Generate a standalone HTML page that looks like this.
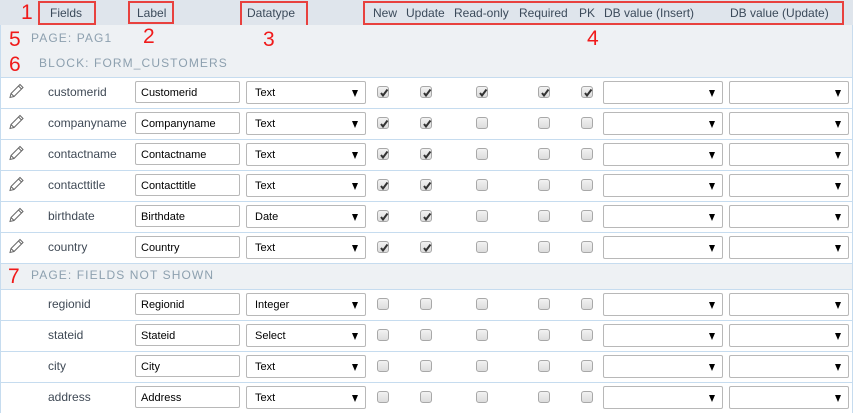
<!DOCTYPE html>
<html><head><meta charset="utf-8"><style>
*{margin:0;padding:0;box-sizing:border-box}
body{width:853px;height:413px;overflow:hidden;background:#fff;font-family:"Liberation Sans",Arial,sans-serif;position:relative}
.a{position:absolute}
.hdr{left:0;top:0;width:853px;height:25px;background:#dfe5ec}
.ht{position:absolute;top:6px;font-size:12px;color:#3b4a5a}
.rb{position:absolute;border:2px solid #e8413e}
.num{position:absolute;color:#f01a1a;font-size:21px;line-height:1}
.sec{position:absolute;left:0;width:853px;background:#eef1f4;box-shadow:inset 1px 0 #c8dcee,inset -1px 0 #c8dcee}
.st{position:absolute;font-size:12px;letter-spacing:1.1px;color:#8da0af}
.row{position:absolute;left:0;width:853px;height:31px;border-top:1px solid #c6dcef;box-shadow:inset 1px 0 #c6dcef,inset -1px 0 #c6dcef}
.fn{position:absolute;left:48px;top:7px;font-size:12px;color:#3f4955}
.in{position:absolute;left:135px;top:3px;width:105px;height:22px;border:1px solid #b8b8b8;border-radius:2px;font-size:11px;color:#000;padding:5px 0 0 5px}
.sel{position:absolute;top:3px;height:23px;border:1px solid #b8b8b8;border-radius:2px;font-size:11px;color:#000;padding:5px 0 0 8px}
.sel:after{content:"";position:absolute;right:7px;top:8px;border-left:3.5px solid transparent;border-right:3.5px solid transparent;border-top:7px solid #000}
.cb{position:absolute;top:8px;width:12px;height:12px;border:1px solid #a8a8a8;border-radius:3px;background:linear-gradient(#f2f2f2,#dcdcdc)}
.cb svg{position:absolute;left:1px;top:1px}
.pen{position:absolute;left:8px;top:5px}
</style></head><body>
<div class="a hdr"></div>
<span class="ht" style="left:50px">Fields</span>
<span class="ht" style="left:137px">Label</span>
<span class="ht" style="left:247px">Datatype</span>
<span class="ht" style="left:373px">New</span>
<span class="ht" style="left:406px">Update</span>
<span class="ht" style="left:454px">Read-only</span>
<span class="ht" style="left:519px">Required</span>
<span class="ht" style="left:579px">PK</span>
<span class="ht" style="left:604px">DB value (Insert)</span>
<span class="ht" style="left:730px">DB value (Update)</span>
<div class="rb" style="left:38px;top:1px;width:58px;height:24px"></div>
<div class="rb" style="left:128px;top:1px;width:46px;height:23px"></div>
<div class="rb" style="left:240px;top:1px;width:68px;height:26px"></div>
<div class="rb" style="left:363px;top:1px;width:481px;height:24px"></div>
<div class="sec" style="top:25px;height:53px"></div>
<span class="st" style="left:31px;top:31px">PAGE: PAG1</span>
<span class="st" style="left:39px;top:56px">BLOCK: FORM_CUSTOMERS</span>
<span class="num" style="left:21px;top:2px">1</span>
<span class="num" style="left:143px;top:26px">2</span>
<span class="num" style="left:263px;top:29px">3</span>
<span class="num" style="left:587px;top:28px">4</span>
<span class="num" style="left:9px;top:29px">5</span>
<span class="num" style="left:9px;top:54px">6</span>

<div class="row" style="top:77px"><svg class="pen" width="16" height="16" viewBox="0 0 16 16"><path d="M2 14.5 L3 10.5 L12 1.5 L15 4.5 L6 13.5 Z M3 10.5 L6 13.5 M10.5 3 L13.5 6" fill="none" stroke="#666" stroke-width="1"/></svg><span class="fn">customerid</span><div class="in">Customerid</div><div class="sel" style="left:246px;width:120px">Text</div><div class="cb" style="left:377px"><svg width="10" height="10"><path d="M2 5 L4 7.5 L8.5 1.5" fill="none" stroke="#333" stroke-width="2"/></svg></div><div class="cb" style="left:420px"><svg width="10" height="10"><path d="M2 5 L4 7.5 L8.5 1.5" fill="none" stroke="#333" stroke-width="2"/></svg></div><div class="cb" style="left:476px"><svg width="10" height="10"><path d="M2 5 L4 7.5 L8.5 1.5" fill="none" stroke="#333" stroke-width="2"/></svg></div><div class="cb" style="left:538px"><svg width="10" height="10"><path d="M2 5 L4 7.5 L8.5 1.5" fill="none" stroke="#333" stroke-width="2"/></svg></div><div class="cb" style="left:581px"><svg width="10" height="10"><path d="M2 5 L4 7.5 L8.5 1.5" fill="none" stroke="#333" stroke-width="2"/></svg></div><div class="sel" style="left:603px;width:120px"></div><div class="sel" style="left:729px;width:120px"></div></div>

<div class="row" style="top:108px"><svg class="pen" width="16" height="16" viewBox="0 0 16 16"><path d="M2 14.5 L3 10.5 L12 1.5 L15 4.5 L6 13.5 Z M3 10.5 L6 13.5 M10.5 3 L13.5 6" fill="none" stroke="#666" stroke-width="1"/></svg><span class="fn">companyname</span><div class="in">Companyname</div><div class="sel" style="left:246px;width:120px">Text</div><div class="cb" style="left:377px"><svg width="10" height="10"><path d="M2 5 L4 7.5 L8.5 1.5" fill="none" stroke="#333" stroke-width="2"/></svg></div><div class="cb" style="left:420px"><svg width="10" height="10"><path d="M2 5 L4 7.5 L8.5 1.5" fill="none" stroke="#333" stroke-width="2"/></svg></div><div class="cb" style="left:476px"></div><div class="cb" style="left:538px"></div><div class="cb" style="left:581px"></div><div class="sel" style="left:603px;width:120px"></div><div class="sel" style="left:729px;width:120px"></div></div>

<div class="row" style="top:139px"><svg class="pen" width="16" height="16" viewBox="0 0 16 16"><path d="M2 14.5 L3 10.5 L12 1.5 L15 4.5 L6 13.5 Z M3 10.5 L6 13.5 M10.5 3 L13.5 6" fill="none" stroke="#666" stroke-width="1"/></svg><span class="fn">contactname</span><div class="in">Contactname</div><div class="sel" style="left:246px;width:120px">Text</div><div class="cb" style="left:377px"><svg width="10" height="10"><path d="M2 5 L4 7.5 L8.5 1.5" fill="none" stroke="#333" stroke-width="2"/></svg></div><div class="cb" style="left:420px"><svg width="10" height="10"><path d="M2 5 L4 7.5 L8.5 1.5" fill="none" stroke="#333" stroke-width="2"/></svg></div><div class="cb" style="left:476px"></div><div class="cb" style="left:538px"></div><div class="cb" style="left:581px"></div><div class="sel" style="left:603px;width:120px"></div><div class="sel" style="left:729px;width:120px"></div></div>

<div class="row" style="top:170px"><svg class="pen" width="16" height="16" viewBox="0 0 16 16"><path d="M2 14.5 L3 10.5 L12 1.5 L15 4.5 L6 13.5 Z M3 10.5 L6 13.5 M10.5 3 L13.5 6" fill="none" stroke="#666" stroke-width="1"/></svg><span class="fn">contacttitle</span><div class="in">Contacttitle</div><div class="sel" style="left:246px;width:120px">Text</div><div class="cb" style="left:377px"><svg width="10" height="10"><path d="M2 5 L4 7.5 L8.5 1.5" fill="none" stroke="#333" stroke-width="2"/></svg></div><div class="cb" style="left:420px"><svg width="10" height="10"><path d="M2 5 L4 7.5 L8.5 1.5" fill="none" stroke="#333" stroke-width="2"/></svg></div><div class="cb" style="left:476px"></div><div class="cb" style="left:538px"></div><div class="cb" style="left:581px"></div><div class="sel" style="left:603px;width:120px"></div><div class="sel" style="left:729px;width:120px"></div></div>

<div class="row" style="top:201px"><svg class="pen" width="16" height="16" viewBox="0 0 16 16"><path d="M2 14.5 L3 10.5 L12 1.5 L15 4.5 L6 13.5 Z M3 10.5 L6 13.5 M10.5 3 L13.5 6" fill="none" stroke="#666" stroke-width="1"/></svg><span class="fn">birthdate</span><div class="in">Birthdate</div><div class="sel" style="left:246px;width:120px">Date</div><div class="cb" style="left:377px"><svg width="10" height="10"><path d="M2 5 L4 7.5 L8.5 1.5" fill="none" stroke="#333" stroke-width="2"/></svg></div><div class="cb" style="left:420px"><svg width="10" height="10"><path d="M2 5 L4 7.5 L8.5 1.5" fill="none" stroke="#333" stroke-width="2"/></svg></div><div class="cb" style="left:476px"></div><div class="cb" style="left:538px"></div><div class="cb" style="left:581px"></div><div class="sel" style="left:603px;width:120px"></div><div class="sel" style="left:729px;width:120px"></div></div>

<div class="row" style="top:232px"><svg class="pen" width="16" height="16" viewBox="0 0 16 16"><path d="M2 14.5 L3 10.5 L12 1.5 L15 4.5 L6 13.5 Z M3 10.5 L6 13.5 M10.5 3 L13.5 6" fill="none" stroke="#666" stroke-width="1"/></svg><span class="fn">country</span><div class="in">Country</div><div class="sel" style="left:246px;width:120px">Text</div><div class="cb" style="left:377px"><svg width="10" height="10"><path d="M2 5 L4 7.5 L8.5 1.5" fill="none" stroke="#333" stroke-width="2"/></svg></div><div class="cb" style="left:420px"><svg width="10" height="10"><path d="M2 5 L4 7.5 L8.5 1.5" fill="none" stroke="#333" stroke-width="2"/></svg></div><div class="cb" style="left:476px"></div><div class="cb" style="left:538px"></div><div class="cb" style="left:581px"></div><div class="sel" style="left:603px;width:120px"></div><div class="sel" style="left:729px;width:120px"></div></div>

<div class="sec" style="top:263px;height:27px;border-top:1px solid #c6dcef"></div>
<span class="st" style="left:31px;top:268px">PAGE: FIELDS NOT SHOWN</span>
<span class="num" style="left:8px;top:266px">7</span>

<div class="row" style="top:289px"><span class="fn">regionid</span><div class="in">Regionid</div><div class="sel" style="left:246px;width:120px">Integer</div><div class="cb" style="left:377px"></div><div class="cb" style="left:420px"></div><div class="cb" style="left:476px"></div><div class="cb" style="left:538px"></div><div class="cb" style="left:581px"></div><div class="sel" style="left:603px;width:120px"></div><div class="sel" style="left:729px;width:120px"></div></div>

<div class="row" style="top:320px"><span class="fn">stateid</span><div class="in">Stateid</div><div class="sel" style="left:246px;width:120px">Select</div><div class="cb" style="left:377px"></div><div class="cb" style="left:420px"></div><div class="cb" style="left:476px"></div><div class="cb" style="left:538px"></div><div class="cb" style="left:581px"></div><div class="sel" style="left:603px;width:120px"></div><div class="sel" style="left:729px;width:120px"></div></div>

<div class="row" style="top:351px"><span class="fn">city</span><div class="in">City</div><div class="sel" style="left:246px;width:120px">Text</div><div class="cb" style="left:377px"></div><div class="cb" style="left:420px"></div><div class="cb" style="left:476px"></div><div class="cb" style="left:538px"></div><div class="cb" style="left:581px"></div><div class="sel" style="left:603px;width:120px"></div><div class="sel" style="left:729px;width:120px"></div></div>

<div class="row" style="top:382px"><span class="fn">address</span><div class="in">Address</div><div class="sel" style="left:246px;width:120px">Text</div><div class="cb" style="left:377px"></div><div class="cb" style="left:420px"></div><div class="cb" style="left:476px"></div><div class="cb" style="left:538px"></div><div class="cb" style="left:581px"></div><div class="sel" style="left:603px;width:120px"></div><div class="sel" style="left:729px;width:120px"></div></div>
</body></html>
